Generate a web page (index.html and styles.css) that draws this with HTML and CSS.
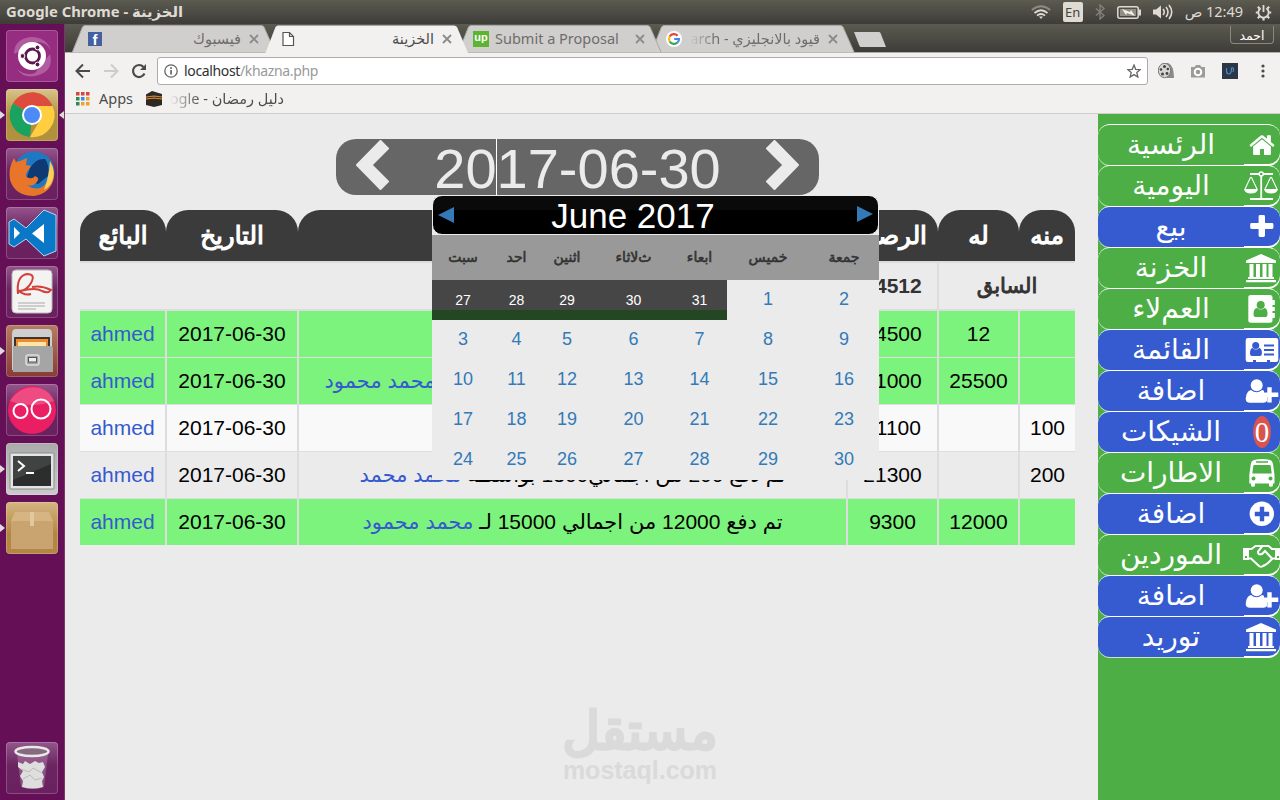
FILE: index.html
```html
<!DOCTYPE html>
<html lang="ar">
<head>
    <meta charset="UTF-8">
    <title>الخزينة</title>
    <link rel="stylesheet" href="styles.css">
</head>
<body>
    <svg class="defs" width="0" height="0">
      <defs>
        <symbol id="bank" viewBox="0 0 36 40">
          <path d="M17 7 32 13.5V16H2v-2.500zM5.500 17h4v13h2.500V17h4v13h2.500V17h4v13h2V17h4v13h1.500v2h-26v-2h1.500zM2 33h30v2.200H2z"/>
        </symbol>
        <symbol id="userplus" viewBox="0 0 36 40">
          <circle cx="12.700" cy="15.200" r="6"/>
          <path d="M7 20q5.500 4.500 11 0l2 .8V26h3v5q-1 1.700-3.500 1.700H6q-4.300 0-4.300-4Q2 21.500 7 20z"/>
          <path d="M23.300 17.300h4.400v5.200h6.600v4.400h-6.600v5.600h-4.400v-5.600h-6v-4.400h6z"/>
        </symbol>
        <symbol id="close" viewBox="0 0 10 10">
          <path d="M1 1l8 8M9 1l-8 8" fill="none" stroke="#8c8b89" stroke-width="1.800"/>
        </symbol>
        <symbol id="tabshape" viewBox="0 0 204 28" preserveAspectRatio="none">
          <path d="M0 28 10.500 2Q11.500.5 13 .5H189q2 0 3 1.500L203.500 28z"/>
        </symbol>
      </defs>
    </svg>

    <div class="panel">
      <span class="panel-title">Google Chrome - الخزينة</span>
      <div class="indicators">
        <svg class="wifi" width="20" height="16" viewBox="0 0 20 16" fill="none" stroke="#dfdbd2" stroke-width="1.700">
          <path d="M.8 6Q10-1.500 19.200 6" stroke="#8d8a82"/><path d="M3.500 9Q10 3.500 16.500 9"/><path d="M6 11.700Q10 8.300 14 11.700"/><path d="M8 12.500h4L10 15z" fill="#dfdbd2" stroke="none"/>
        </svg>
        <span class="lang">En</span>
        <svg class="bt" width="10" height="16" viewBox="0 0 10 16" fill="none" stroke="#86837b" stroke-width="1.300"><path d="M1 4.500l8 7-4 3.500V1l4 3.500-8 7"/></svg>
        <svg class="battery" width="24" height="13" viewBox="0 0 24 13"><rect x=".8" y=".8" width="20.400" height="11.400" rx="2" fill="none" stroke="#dfdbd2" stroke-width="1.500"/><rect x="22" y="3.500" width="2" height="6" fill="#dfdbd2"/><rect x="3" y="3" width="16" height="7" fill="#918e86"/><path d="M5 3l8 3 1-2 4 6-8-3-1 2z" fill="#f3f0e8"/></svg>
        <svg class="sound" width="20" height="16" viewBox="0 0 20 16" fill="none" stroke="#dfdbd2" stroke-width="1.600"><path d="M0 5.500h3L8 1.500v13L3 10.500H0z" fill="#dfdbd2" stroke="none"/><path d="M10 5q2.500 3 0 6M13 3q4 5 0 10M16 1q5.500 7 0 14"/></svg>
        <span class="clock" dir="rtl">12:49 ص</span>
        <svg class="gear" width="17" height="17" viewBox="0 0 17 17" fill="none" stroke="#dfdbd2"><path d="M5.700 4.200a5.200 5.200 0 1 0 5.600 0" stroke-width="1.900"/><path d="M8.500 1v7" stroke-width="1.800"/><path d="M.8 8.500h2M14.200 8.500h2M2.800 2.800l1.700 1.700M14.200 2.800l-1.700 1.700M2.800 14.200l1.700-1.700M14.200 14.200l-1.700-1.700M8.500 14v2.500" stroke-width="2.200"/></svg>
      </div>
    </div>

    <div class="desktop">
      <div class="launcher">
        <div class="app dash">
          <svg viewBox="0 0 52 52"><path d="M8 24Q8 9 25 7q16 0 20 14-3-8-13-9M44 24q4 16-11 21-15 5-22-6 8 7 18 4" fill="#c98bbd" opacity=".5"/><circle cx="26" cy="26" r="14" fill="#fff"/><circle cx="26.500" cy="26" r="7" fill="none" stroke="#5c1650" stroke-width="2.800"/><g fill="#5c1650" stroke="#fff"><circle cx="16.500" cy="26" r="2.400"/><circle cx="31.500" cy="17.500" r="2.400"/><circle cx="31.500" cy="34.500" r="2.400"/></g></svg>
        </div>
        <div class="app chrome running focused">
          <svg viewBox="0 0 52 52"><path d="M26 26 6.900 14.500A22 22 0 0 1 46.500 17z" fill="#dd4b3e"/><path d="M26 26 24 48A22 22 0 0 1 7 14.500z" fill="#1aa260"/><path d="M26 17h20.500A22 22 0 0 1 24 48l10-17z" fill="#ffcd40"/><circle cx="26" cy="26" r="10" fill="#fff"/><circle cx="26" cy="26" r="8" fill="#4c8bf5"/></svg>
        </div>
        <div class="app firefox">
          <svg viewBox="0 0 52 52"><circle cx="28" cy="24" r="20.500" fill="#1f79c2"/><path d="M24 20q6-10 15-9 5 6 3 17l-10 8-12-4z" fill="#0d3a73"/><path d="M44 13q6 10 3.500 19Q43 46 28 48 9 48 4 32q-2-12 4-22l2 4 4-1 7-3-1 7 5 1-4 6q-3 5 2 6 4 1 6-2 6 2 1 7-4 4-9 2 8 6 15 2 9-6 8-25z" fill="#e9752a"/><path d="M44 13q7 12 1 23-3 4-7 6 5-13 6-29z" fill="#f8d05b"/></svg>
        </div>
        <div class="app vscode">
          <svg viewBox="0 0 52 52"><path d="M3 15l5-3 12 9L38 3l12 5v36l-12 5-18-17-12 8-5-3z" fill="#0b78c7" stroke="#b9d6f0" stroke-width="1"/><path d="M8 20l6 6-6 6zM38 17v19L26 26.500z" fill="#fff"/></svg>
        </div>
        <div class="app reader">
          <svg viewBox="0 0 52 52"><rect x="6" y="4" width="40" height="43" rx="4" fill="#f3f3f2" stroke="#bcbabc"/><path d="M12 28q-2-18 9-20 9 0 4 9-4 7-11 8 16-4 22 0 6 3 9-1-10-5-19-3M12 24q6 6 13 4" fill="none" stroke="#d2403c" stroke-width="2"/><path d="M12 37h27M12 40h27M12 43h18" stroke="#aaa" stroke-width="1.200"/></svg>
        </div>
        <div class="app files running">
          <svg viewBox="0 0 52 52"><path d="M6 9q0-5 4-5h32q4 0 4 5v36H6z" fill="#cfcfcf"/><rect x="8" y="12" width="36" height="12" fill="#3d342f"/><path d="M10 14h32v9H10z" fill="#f08a2b"/><path d="M12 17h28v6H12z" fill="#ffe6a8"/><path d="M7 21h14l2-0h20q3 0 4 1v25H7z" fill="#a5a5a5"/><rect x="20" y="30" width="13" height="10" rx="2" fill="none" stroke="#ddd" stroke-width="1.500"/><rect x="22.500" y="32.500" width="8" height="4.500" fill="#eee" stroke="#555"/></svg>
        </div>
        <div class="app flickr">
          <svg viewBox="0 0 52 52"><circle cx="26" cy="26" r="24" fill="#e91e63"/><path d="M4 17Q15 0 34 4q10 3 14 13-22 8-44 0z" fill="#fff" opacity=".2"/><circle cx="14.500" cy="27" r="7" fill="none" stroke="#fff" stroke-width="2"/><circle cx="35" cy="25" r="9.500" fill="none" stroke="#fff" stroke-width="2"/></svg>
        </div>
        <div class="app terminal running">
          <svg viewBox="0 0 52 52"><rect x="4" y="10" width="44" height="36" rx="1" fill="#e4e4e4" stroke="#8c8c8c"/><rect x="7" y="13" width="38" height="30" fill="#2b2e2c"/><path d="M7 13h38v8L7 37z" fill="#fff" opacity=".1"/><path d="M12 18l6 5-6 5M20 30h8" fill="none" stroke="#fff" stroke-width="2"/></svg>
        </div>
        <div class="app package running">
          <svg viewBox="0 0 52 52"><path d="M9 10h34l4 9v28H5V19z" fill="#c9a471"/><path d="M9 10h34l4 9H5z" fill="#d6b583"/><path d="M24 10h4v14h-4z" fill="#e3c89b"/></svg>
        </div>
        <div class="app trash">
          <svg viewBox="0 0 52 52"><path d="M11 12h31l-4 33q-11 4-23 0z" fill="#c9a3c5" opacity=".35"/><path d="M12 20l5 2 2-3 5 3 5-3 4 2 4-1 2 5-3 5 2 5-2 4 1 6q-10 3-21 0l1-6-3-5 3-5-5-4z" fill="#dedede"/><path d="M15 27l8 3 4-4 9 5M17 37l7-4 5 5 7-2" stroke="#bbb" fill="none"/><ellipse cx="26" cy="9.500" rx="16.500" ry="4.500" fill="#866b80" stroke="#e8e8e6" stroke-width="2.500"/></svg>
        </div>
      </div>

      <div class="browser">
        <div class="tabstrip">
          <div class="tab">
            <svg class="tab-bg"><use href="#tabshape"/></svg>
            <span class="favicon facebook">f</span>
            <span class="tab-text" dir="rtl">فيسبوك</span>
            <svg class="tab-close"><use href="#close"/></svg>
          </div>
          <div class="tab active">
            <svg class="tab-bg"><use href="#tabshape"/></svg>
            <svg class="favicon" viewBox="0 0 16 16"><path d="M3 1.500h6.500l4 4v9H3zM9.500 1.500v4h4" fill="#fff" stroke="#555" stroke-width="1.200"/></svg>
            <span class="tab-text" dir="rtl">الخزينة</span>
            <svg class="tab-close"><use href="#close"/></svg>
          </div>
          <div class="tab third">
            <svg class="tab-bg"><use href="#tabshape"/></svg>
            <span class="favicon upwork">up</span>
            <span class="tab-text">Submit a Proposal</span>
            <svg class="tab-close"><use href="#close"/></svg>
          </div>
          <div class="tab fourth">
            <svg class="tab-bg"><use href="#tabshape"/></svg>
            <svg class="favicon" viewBox="0 0 16 16"><circle cx="8" cy="8" r="8" fill="#fff"/><g fill="none" stroke-width="2.200"><path d="M11.600 4.700A5 5 0 0 0 3.700 5.500" stroke="#ea4335"/><path d="M3.700 5.500a5 5 0 0 0 0 5" stroke="#fbbc05"/><path d="M3.700 10.500a5 5 0 0 0 7.800 1" stroke="#34a853"/><path d="M11.500 11.500A5 5 0 0 0 13 8H8.200" stroke="#4285f4"/></g></svg>
            <span class="tab-text faded" dir="rtl">قيود بالانجليزي - Search</span>
            <svg class="tab-close"><use href="#close"/></svg>
          </div>
          <svg class="newtab" width="34" height="16" viewBox="0 0 34 16"><path d="M1 0h25q1 0 1.500 1L33 15H8q-1 0-1.500-1z" fill="#d1cfcd"/></svg>
          <span class="profile">احمد</span>
        </div>

        <div class="toolbar">
          <svg class="nav" width="16" height="16" viewBox="0 0 16 16" fill="none" stroke="#4a4a4a" stroke-width="2"><path d="M15 8H2M8 1.500 1.500 8 8 14.500"/></svg>
          <svg class="nav" width="16" height="16" viewBox="0 0 16 16" fill="none" stroke="#ccc" stroke-width="2"><path d="M1 8h13M8 1.500 14.500 8 8 14.500"/></svg>
          <svg class="nav" width="16" height="16" viewBox="0 0 16 16"><path d="M13.500 10.500A6 6 0 1 1 12.500 4" fill="none" stroke="#4a4a4a" stroke-width="2.200"/><path d="M15 1v6H9z" fill="#4a4a4a"/></svg>
          <div class="address">
            <svg width="14" height="14" viewBox="0 0 14 14"><circle cx="7" cy="7" r="6.200" fill="none" stroke="#666" stroke-width="1.300"/><path d="M6.200 6h1.700v4.500H6.200zM6.200 3.300h1.700v1.600H6.200z" fill="#666"/></svg>
            <span class="url">localhost<i>/khazna.php</i></span>
            <svg width="14" height="14" viewBox="0 0 14 14"><path d="M7 1l1.700 4.300 4.600.3-3.500 3 1.100 4.500L7 10.600l-3.900 2.500 1.100-4.500-3.500-3 4.600-.3z" fill="none" stroke="#666" stroke-width="1.300"/></svg>
          </div>
          <svg class="ext" width="16" height="16" viewBox="0 0 16 16"><path d="M6 0h4q6 2 6 15H9z" fill="#8b8b8b"/><ellipse cx="6.500" cy="7.500" rx="6.200" ry="7.200" fill="#d5d5d5" stroke="#777"/><g fill="#444"><circle cx="6.500" cy="3.500" r="1.500"/><circle cx="3" cy="6.500" r="1.300"/><circle cx="4.500" cy="11" r="1.500"/><circle cx="9" cy="10.500" r="1.400"/><circle cx="9.800" cy="6" r="1.300"/></g></svg>
          <svg class="ext" width="16" height="16" viewBox="0 0 16 16"><path d="M1 4h3.500L6 2h4l1.500 2H15v10.500H1z" fill="#9b9b9b"/><circle cx="8" cy="9" r="3.300" fill="none" stroke="#fff" stroke-width="2"/></svg>
          <svg class="ext" width="16" height="16" viewBox="0 0 16 16"><path d="M0 0h16v16H0z" fill="#2b3647"/><path d="M4.500 5v3q0 3 2.500 3t2.500-6q3-1 1.500 4" fill="none" stroke="#4a86c8" stroke-width="1.200"/></svg>
          <svg class="menu" width="4" height="14" viewBox="0 0 4 14" fill="#4a4a4a"><circle cx="2" cy="2" r="1.600"/><circle cx="2" cy="7" r="1.600"/><circle cx="2" cy="12" r="1.600"/></svg>
        </div>

        <div class="bookmarks">
          <svg width="14" height="14" viewBox="0 0 14 14"><path d="M0 0h3.500v3.500H0zM5 0h3.500v3.500H5zM10 0h3.500v3.500H10z" fill="#d9453d"/><path d="M0 5h3.500v3.500H0z" fill="#2e8b57"/><path d="M5 5h3.500v3.500H5z" fill="#3f86e8"/><path d="M10 5h3.500v3.500H10zM10 10h3.500v3.500H10zM5 10h3.500v3.500H5z" fill="#eba22f"/><path d="M0 10h3.500v3.500H0z" fill="#2e8b57"/></svg>
          <span class="apps">Apps</span>
          <svg width="16" height="16" viewBox="0 0 16 16"><path d="M0 3.500 6 0l10 3v11l-8 2-8-2z" fill="#2e2925"/><path d="M0 6l8-1 8 1M0 8l8-1 8 1" stroke="#e08a2d" stroke-width="1.100" fill="none"/></svg>
          <span class="ramadan" dir="rtl">دليل رمضان - Google</span>
        </div>

        <div class="page">
          <div class="main">
            <div class="datebar">
              <svg width="34" height="51" viewBox="0 0 34 51"><path d="M24.500 1 32 8.500 15.500 25 32 41.500 24.500 49 1 25z" fill="#ebebeb" stroke="#ebebeb" stroke-width="2" stroke-linejoin="round"/></svg>
              <span class="date">2017-06-30</span>
              <span class="caret"></span>
              <svg width="34" height="51" viewBox="0 0 34 51"><path d="M9.500 1 2 8.500 18.500 25 2 41.500 9.500 49 33 25z" fill="#ebebeb" stroke="#ebebeb" stroke-width="2" stroke-linejoin="round"/></svg>
            </div>

            <table class="ledger" dir="rtl">
              <colgroup><col class="c1"><col class="c2"><col class="c3"><col class="c4"><col class="c5"><col class="c6"></colgroup>
              <tr><th>منه</th><th>له</th><th>الرصيد</th><th></th><th>التاريخ</th><th>البائع</th></tr>
              <tr class="prev"><td colspan="2" class="prev-name">السابق</td><td>34512</td><td colspan="3"></td></tr>
              <tr class="green"><td></td><td>12</td><td>34500</td><td></td><td dir="ltr">2017-06-30</td><td><a>ahmed</a></td></tr>
              <tr class="green"><td></td><td>25500</td><td>21000</td><td>تم دفع 25500 من حسابات اجمالي 25500 لـ <a>محمد محمود</a></td><td dir="ltr">2017-06-30</td><td><a>ahmed</a></td></tr>
              <tr class="white"><td>100</td><td></td><td>21100</td><td></td><td dir="ltr">2017-06-30</td><td><a>ahmed</a></td></tr>
              <tr><td>200</td><td></td><td>21300</td><td>تم دفع 200 من اجمالي1300 بواسطة <a>محمد محمد</a></td><td dir="ltr">2017-06-30</td><td><a>ahmed</a></td></tr>
              <tr class="green last"><td></td><td>12000</td><td>9300</td><td>تم دفع 12000 من اجمالي 15000 لـ <a>محمد محمود</a></td><td dir="ltr">2017-06-30</td><td><a>ahmed</a></td></tr>
            </table>

            <div class="calendar">
              <div class="cal-head">
                <svg width="16" height="16" viewBox="0 0 16 16"><path d="M0 8 16 0v16z" fill="#337ab7"/></svg>
                <span>June 2017</span>
                <svg class="next" width="16" height="16" viewBox="0 0 16 16"><path d="M16 8 0 0v16z" fill="#337ab7"/></svg>
              </div>
              <div class="cal-grid">
                <b>سبت</b><b>احد</b><b>اثنين</b><b>ثﻻثاء</b><b>ابعاء</b><b>خميس</b><b>جمعة</b>
                <i>27</i><i>28</i><i>29</i><i>30</i><i>31</i><a>1</a><a>2</a>
                <a>3</a><a>4</a><a>5</a><a>6</a><a>7</a><a>8</a><a>9</a>
                <a>10</a><a>11</a><a>12</a><a>13</a><a>14</a><a>15</a><a>16</a>
                <a>17</a><a>18</a><a>19</a><a>20</a><a>21</a><a>22</a><a>23</a>
                <a>24</a><a>25</a><a>26</a><a>27</a><a>28</a><a>29</a><a>30</a>
              </div>
            </div>

            <div class="watermark">
              <span class="wm-ar">مستقل</span>
              <span class="wm-en">mostaql.com</span>
            </div>
          </div>

          <div class="sidebar">
            <a class="item"><span>الرئسية</span><svg viewBox="0 0 36 40"><path transform="translate(4.200 7.300) scale(.0154)" d="M1472 992v480q0 26-19 45t-45 19h-384v-384h-256v384h-384q-26 0-45-19t-19-45v-480q0-1 .5-3t.5-3l575-474 575 474q1 2 1 6zm223-69l-62 74q-8 9-21 11h-3q-13 0-21-7l-692-577-692 577q-12 8-24 7-13-2-21-11l-62-74q-8-10-7-23.500t11-21.500l719-599q32-26 76-26t76 26l244 204v-195q0-14 9-23t23-9h192q14 0 23 9t9 23v408l219 182q10 8 11 21.500t-7 23.500z"/></svg></a>
            <a class="item"><span>اليومية</span><svg viewBox="0 0 36 40"><path d="M6 9h9.500M19 9h10M17.200 11v22M6 34h23" stroke="#fff" stroke-width="1.800" fill="none"/><circle cx="17.200" cy="9" r="2" fill="none" stroke="#fff" stroke-width="1.500"/><path d="M6.700 12 1 24M7.300 12 13 24M26.700 12 21 24M27.300 12 33 24" stroke="#fff" stroke-width="1.100"/><path d="M0 24h14q-1 4.500-7 4.500T0 24zM20 24h14q-1 4.500-7 4.500T20 24z"/></svg></a>
            <a class="item blue"><span>بيع</span><svg viewBox="0 0 36 40"><path d="M16 9h3.600q1.400 0 1.400 1.400V17h7q1.400 0 1.400 1.400v3.200q0 1.400-1.400 1.400h-7v6.600q0 1.400-1.400 1.400H16q-1.400 0-1.400-1.400V23h-7q-1.400 0-1.400-1.400v-3.200Q6.200 17 7.600 17h7v-6.600Q14.600 9 16 9z"/></svg></a>
            <a class="item"><span>الخزنة</span><svg><use href="#bank"/></svg></a>
            <a class="item"><span>العمﻻء</span><svg viewBox="0 0 36 40"><path d="M7 7h19q2.500 0 2.500 2.500V12h2.300v5h-2.300v2h2.300v4h-2.300v2h2.300v5h-2.300v2.200q0 2.500-2.500 2.500H7q-2.700 0-2.700-2.500v-23Q4.300 7 7 7z"/><g class="cut"><circle cx="16.700" cy="17" r="4"/><path d="M13 20q4 3 7.500 0 3 .5 3 6 0 3-2 3h-10q-2 0-2-3 0-5.500 3.500-6z"/></g></svg></a>
            <a class="item blue"><span>القائمة</span><svg viewBox="0 0 36 40"><path d="M4 9h28q2.300 0 2.300 2.300v19.400Q34.300 33 32 33h-6v-2h-3v2H12v-2H9v2H4q-2.300 0-2.300-2.300V11.300Q1.700 9 4 9z"/><g class="cut"><circle cx="11.700" cy="16.500" r="3.500"/><path d="M8.500 19q3.500 3 6.700 0 2.700.5 2.700 5 0 3-2 3h-8Q6 27 6 24q0-4.500 2.500-5zM20 15.500h10v2H20zM20 20h10v2H20zM20 24.500h10v2H20z"/></g></svg></a>
            <a class="item blue"><span>اضافة</span><svg><use href="#userplus"/></svg></a>
            <a class="item blue"><span>الشيكات</span><em class="badge">0</em></a>
            <a class="item"><span>الاطارات</span><svg viewBox="0 0 36 40"><path d="M10 8q8-2 16 0 2.500.7 3 4l1.500 11v8.500H29v1.700q0 1.500-2 1.500t-2-1.500v-1.700H11v1.700q0 1.500-2 1.500t-2-1.500v-1.700H5.300V23L6.800 12q.5-3.300 3.200-4z"/><g class="cut"><path d="M12 9.300h12v1.500H12zM10.500 13h15q1 0 1.200 1l1 7.500H8.300l1-7.500q.2-1 1.200-1z"/><circle cx="9.500" cy="26.500" r="2"/><circle cx="26.500" cy="26.500" r="2"/></g></svg></a>
            <a class="item blue"><span>اضافة</span><svg viewBox="0 0 36 40"><circle cx="17.800" cy="20.800" r="12.200"/><path class="cut" d="M15.800 13.800h4.400v5h5v4.400h-5v5h-4.400v-5h-5v-4.400h5z"/></svg></a>
            <a class="item"><span>الموردين</span><svg viewBox="0 0 36 40"><path d="M-1 14h6v12h-6zM31 14h6v12h-6z"/><path d="M5 15h2.500l4-3h13l3.500 3h3M5 24.500h2L15 32q2 1.500 4 0l2-1 3-2 4.500-4.500H31M18 12.500l-4 5q0 4 4 2.500l3-3 6.500 7" fill="none" stroke="#fff" stroke-width="2.100"/><path class="cut" d="M1 22h2v2H1zM33 22h2v2h-2z"/></svg></a>
            <a class="item blue"><span>اضافة</span><svg><use href="#userplus"/></svg></a>
            <a class="item blue"><span>توريد</span><svg><use href="#bank"/></svg></a>
          </div>
        </div>
      </div>
    </div>
</body>
</html>
```
FILE: styles.css
```css
*{
  padding: 0;
  margin: 0;
  box-sizing: border-box;
}
body{
  width: 1280px;
  height: 800px;
  overflow: hidden;
  display: flex;
  flex-direction: column;
  font-family: "Liberation Sans", "DejaVu Sans", sans-serif;
  background-color: #ebebeb;
}
.defs{
  position: absolute;
}
svg{
  flex: none;
  display: block;
}
i, em{
  font-style: normal;
}

/* top panel */
.panel{
  height: 24px;
  flex: none;
  display: flex;
  justify-content: space-between;
  align-items: center;
  padding: 0 8px 0 6px;
  background: linear-gradient(#5c5b51, #3d3c38);
  color: #dfdbd2;
  font-family: "Noto Sans", "DejaVu Sans", sans-serif;
}
.panel-title{
  font-size: 14.800px;
  font-weight: bold;
  line-height: 23px;
  height: 24px;
}
.indicators{
  display: flex;
  align-items: center;
}
.lang{
  width: 20px;
  height: 20px;
  margin: 0 12px 0 12px;
  border-radius: 2px;
  background: #dfdbd2;
  color: #45443f;
  font-size: 13px;
  line-height: 20px;
  text-align: center;
}
.battery{
  margin: 0 12px 0 12px;
}
.clock{
  margin: 0 12px 0 12px;
  font-size: 14.500px;
  line-height: 23px;
  height: 24px;
}

.desktop{
  flex: 1;
  display: flex;
  min-height: 0;
}

/* launcher */
.launcher{
  width: 65px;
  padding: 6px 0 6px 6px;
  display: flex;
  flex-direction: column;
  gap: 7px;
  background: #650f56;
  border-right: 1px solid #77396c;
}
.app{
  width: 52px;
  height: 52px;
  flex: none;
  position: relative;
  border-radius: 4px;
  background: linear-gradient(#94558c, #6b2561 45%, #6b2060);
  box-shadow: inset 0 0 0 1px rgba(255,255,255,.2);
}
.dash{
  background: #962d80;
}
.chrome{
  background: linear-gradient(#d8c48c, #b2913e 50%);
}
.files{
  background: linear-gradient(#b47e62, #883b37);
}
.terminal{
  background: linear-gradient(#aaa, #cacaca);
}
.package{
  background: linear-gradient(#d5b581, #b48645 60%);
}
.trash{
  margin-top: auto;
}
.running::before{
  content: "";
  position: absolute;
  left: -6px;
  top: 22px;
  border-left: 5px solid #ddd;
  border-top: 4px solid transparent;
  border-bottom: 4px solid transparent;
}
.focused::after{
  content: "";
  position: absolute;
  right: -6px;
  top: 22px;
  border-right: 5px solid #ddd;
  border-top: 4px solid transparent;
  border-bottom: 4px solid transparent;
}

/* browser window */
.browser{
  flex: 1;
  display: flex;
  flex-direction: column;
  min-width: 0;
}
.tabstrip{
  height: 29px;
  flex: none;
  display: flex;
  padding: 1px 6px 0 7px;
  background: linear-gradient(#5c5b51, #3d3c38);
  border-bottom: 1px solid #b0aeac;
}
.tab{
  width: 204px;
  height: 28px;
  flex: none;
  margin-right: -11px;
  padding: 0 17px 0 15px;
  position: relative;
  display: flex;
  align-items: center;
  gap: 8px;
  color: #6e6d6a;
  z-index: 2;
}
.tab-bg{
  position: absolute;
  left: 0;
  top: 0;
  width: 204px;
  height: 28px;
  z-index: -1;
  fill: #d1cfcd;
  stroke: #aaa8a4;
  stroke-width: 1px;
}
.active{
  color: #4c4c4c;
  z-index: 4;
}
.active .tab-bg{
  fill: #f2f1f0;
  stroke: none;
  height: 29px;
}
.fourth{
  z-index: 1;
}
.favicon{
  width: 16px;
  height: 16px;
  flex: none;
}
.facebook{
  width: 14px;
  height: 14px;
  margin: 0 1px;
  background: #4460a0;
  color: #fff;
  font: bold 15px/16px "Liberation Sans", sans-serif;
  text-align: center;
}
.upwork{
  margin-right: -2px;
  background: #5cb531;
  color: #fff;
  font: bold 11px/13px "Liberation Sans", sans-serif;
  text-align: center;
}
.tab-text{
  flex: 1;
  height: 24px;
  font: 14.500px/23px "Noto Sans", "DejaVu Sans", sans-serif;
  white-space: nowrap;
  overflow: hidden;
}
.faded{
  -webkit-mask-image: linear-gradient(to right, transparent, #000 26px);
  mask-image: linear-gradient(to right, transparent, #000 26px);
}
.tab-close{
  width: 10px;
  height: 10px;
}
.newtab{
  margin: 7px 0 0 9px;
}
.profile{
  width: 44px;
  height: 18px;
  margin: 1px 0 0 auto;
  border: 1px solid #8b897f;
  border-top: none;
  border-radius: 0 0 4px 4px;
  color: #fff;
  font: 12.500px/20px "DejaVu Sans", sans-serif;
  text-align: center;
}
.toolbar{
  height: 35px;
  flex: none;
  display: flex;
  align-items: center;
  padding: 0 15px 0 10px;
  background: #f2f1f0;
}
.nav{
  margin-right: 12px;
}
.address{
  width: 991px;
  height: 28px;
  margin-left: -2px;
  padding: 0 6px;
  display: flex;
  align-items: center;
  gap: 6px;
  background: #fff;
  border: 1px solid #aeacaa;
  border-radius: 3px;
}
.url{
  flex: 1;
  font: 14px/26px "Noto Sans", sans-serif;
  letter-spacing: -.35px;
  color: #303030;
}
.url i{
  color: #999;
}
.ext{
  margin-left: 16px;
}
.address + .ext{
  margin-left: 10px;
}
.menu{
  margin-left: auto;
}
.bookmarks{
  height: 26px;
  flex: none;
  display: flex;
  align-items: center;
  padding: 0 11px 4px;
  background: #f2f1f0;
  border-bottom: 1px solid #cfcdcb;
  color: #4c4c4c;
  font: 14.500px/22px "Noto Sans", "DejaVu Sans", sans-serif;
}
.apps{
  margin: -2px 13px 0 9px;
}
.ramadan{
  width: 114px;
  margin: -2px 0 0 8px;
  height: 22px;
  white-space: nowrap;
  overflow: hidden;
  -webkit-mask-image: linear-gradient(to right, transparent, #000 30px);
  mask-image: linear-gradient(to right, transparent, #000 30px);
}

/* page */
.page{
  flex: 1;
  display: flex;
  min-height: 0;
}
.main{
  width: 1033px;
  position: relative;
  padding: 25px 23px 0 15px;
  background: #ebebeb;
}
.datebar{
  position: relative;
  width: 483px;
  height: 56px;
  margin-left: 256px;
  padding: 0 20px 4px;
  display: flex;
  align-items: center;
  justify-content: space-between;
  background: #666;
  border-radius: 20px;
}
.date{
  font-size: 56px;
  line-height: 56px;
  color: #ebebeb;
  padding-top: 7px;
}
/* text cursor standing in the date field */
.caret{
  position: absolute;
  left: 160px;
  top: 0;
  width: 1px;
  height: 56px;
  background: #fff;
}
.ledger{
  width: 995px;
  margin-top: 15px;
  table-layout: fixed;
  border-collapse: separate;
  border-spacing: 0;
  font-size: 21px;
  color: #000;
}
.c1{ width: 56px; }
.c2{ width: 81px; }
.c3{ width: 91px; }
.c4{ width: 549px; }
.c5{ width: 132px; }
.c6{ width: 86px; }
.ledger th{
  height: 51px;
  background: #3b3b3b;
  color: #fff;
  font-size: 24.500px;
  font-weight: normal;
  -webkit-text-stroke: 1.200px #fff;
  line-height: 28px;
  border-radius: 22px 22px 0 0;
  white-space: nowrap;
}
.ledger td{
  height: 47px;
  line-height: 24px;
  text-align: center;
  white-space: nowrap;
  border-left: 1px solid #ddd;
  border-right: 1px solid #ddd;
  border-bottom: 1px solid #ddd;
}
.ledger td:first-child{
  border-right: none;
}
.ledger td:last-child{
  border-left: none;
}
.ledger .prev td{
  height: 50px;
  border-top: 2px solid #ddd;
  border-bottom: 2px solid #ddd;
  font-weight: bold;
  color: #333;
}
.ledger .prev .prev-name{
  font-weight: normal;
  -webkit-text-stroke: .9px #333;
}
.green td{
  background: #7cf37c;
}
.white td{
  background: #f9f9f9;
}
.ledger .last td{
  height: 46px;
  border-bottom: none;
}
.ledger a{
  color: #3559d0;
}

/* date picker dropped over the table */
.calendar{
  position: absolute;
  left: 367px;
  top: 81px;
  width: 447px;
  height: 285px;
  background: #ebebeb;
}
.cal-head{
  height: 40px;
  padding: 0 5px;
  display: flex;
  align-items: center;
  background: linear-gradient(#0a0a0a 14px, #000 14px);
  border: 1px solid #ebebeb;
  border-radius: 10px;
  color: #fff;
  font-size: 35px;
  line-height: 40px;
}
.cal-head span{
  flex: 1;
  padding: 1px 45px 0 0;
  text-align: center;
}
.cal-head .next{
  margin-top: -3px;
}
.cal-grid{
  display: grid;
  grid-template-columns: 62px 45px 56px 77px 55px 82px 70px;
  grid-template-rows: 45px repeat(5, 40px);
  text-align: center;
}
.cal-grid b{
  background: #999;
  color: #333;
  font-size: 14px;
  font-weight: normal;
  -webkit-text-stroke: .6px #333;
  line-height: 44px;
}
.cal-grid i{
  background: linear-gradient(#464646 30px, #234623 30px);
  color: #fff;
  font-size: 14px;
  line-height: 41px;
}
.cal-grid a{
  color: #337ab7;
  font-size: 18px;
  line-height: 38px;
}

.watermark{
  position: absolute;
  left: 497px;
  top: 590px;
  width: 156px;
  display: flex;
  flex-direction: column;
  align-items: center;
  color: #dadada;
  font-weight: bold;
}
.wm-ar{
  font: 52px/54px "DejaVu Sans", sans-serif;
  -webkit-text-stroke: 3px #dadada;
  stroke-linejoin: round;
}
.wm-en{
  font-size: 25px;
  line-height: 24px;
}

/* sidebar menu */
.sidebar{
  width: 182px;
  padding-top: 10px;
  background: #4cae45;
}
.item{
  height: 41px;
  display: flex;
  border-top: 1px solid #fff;
  border-radius: 12px;
  background: #4cae45;
  color: #fff;
  box-shadow: 0 1px 0 rgba(255,255,255,.7);
}
.item span{
  width: 146px;
  height: 40px;
  font: 28px/40px "DejaVu Sans", sans-serif;
  text-align: center;
}
.item svg{
  width: 36px;
  height: 40px;
  fill: #fff;
  overflow: visible;
  margin-top: -1px;
  border-radius: 0 12px 12px 0;
  box-shadow: 0 2px 0 #fff;
}
.item .cut{
  fill: #4cae45;
}
.blue, .item.blue{
  background: #365bd0;
}
.blue .cut{
  fill: #365bd0;
}
.badge{
  width: 18px;
  height: 32px;
  margin: 4px 0 0 9px;
  border-radius: 50%;
  background: #d9534f;
  font: 29px/32px "Liberation Serif", serif;
  text-align: center;
}
```
